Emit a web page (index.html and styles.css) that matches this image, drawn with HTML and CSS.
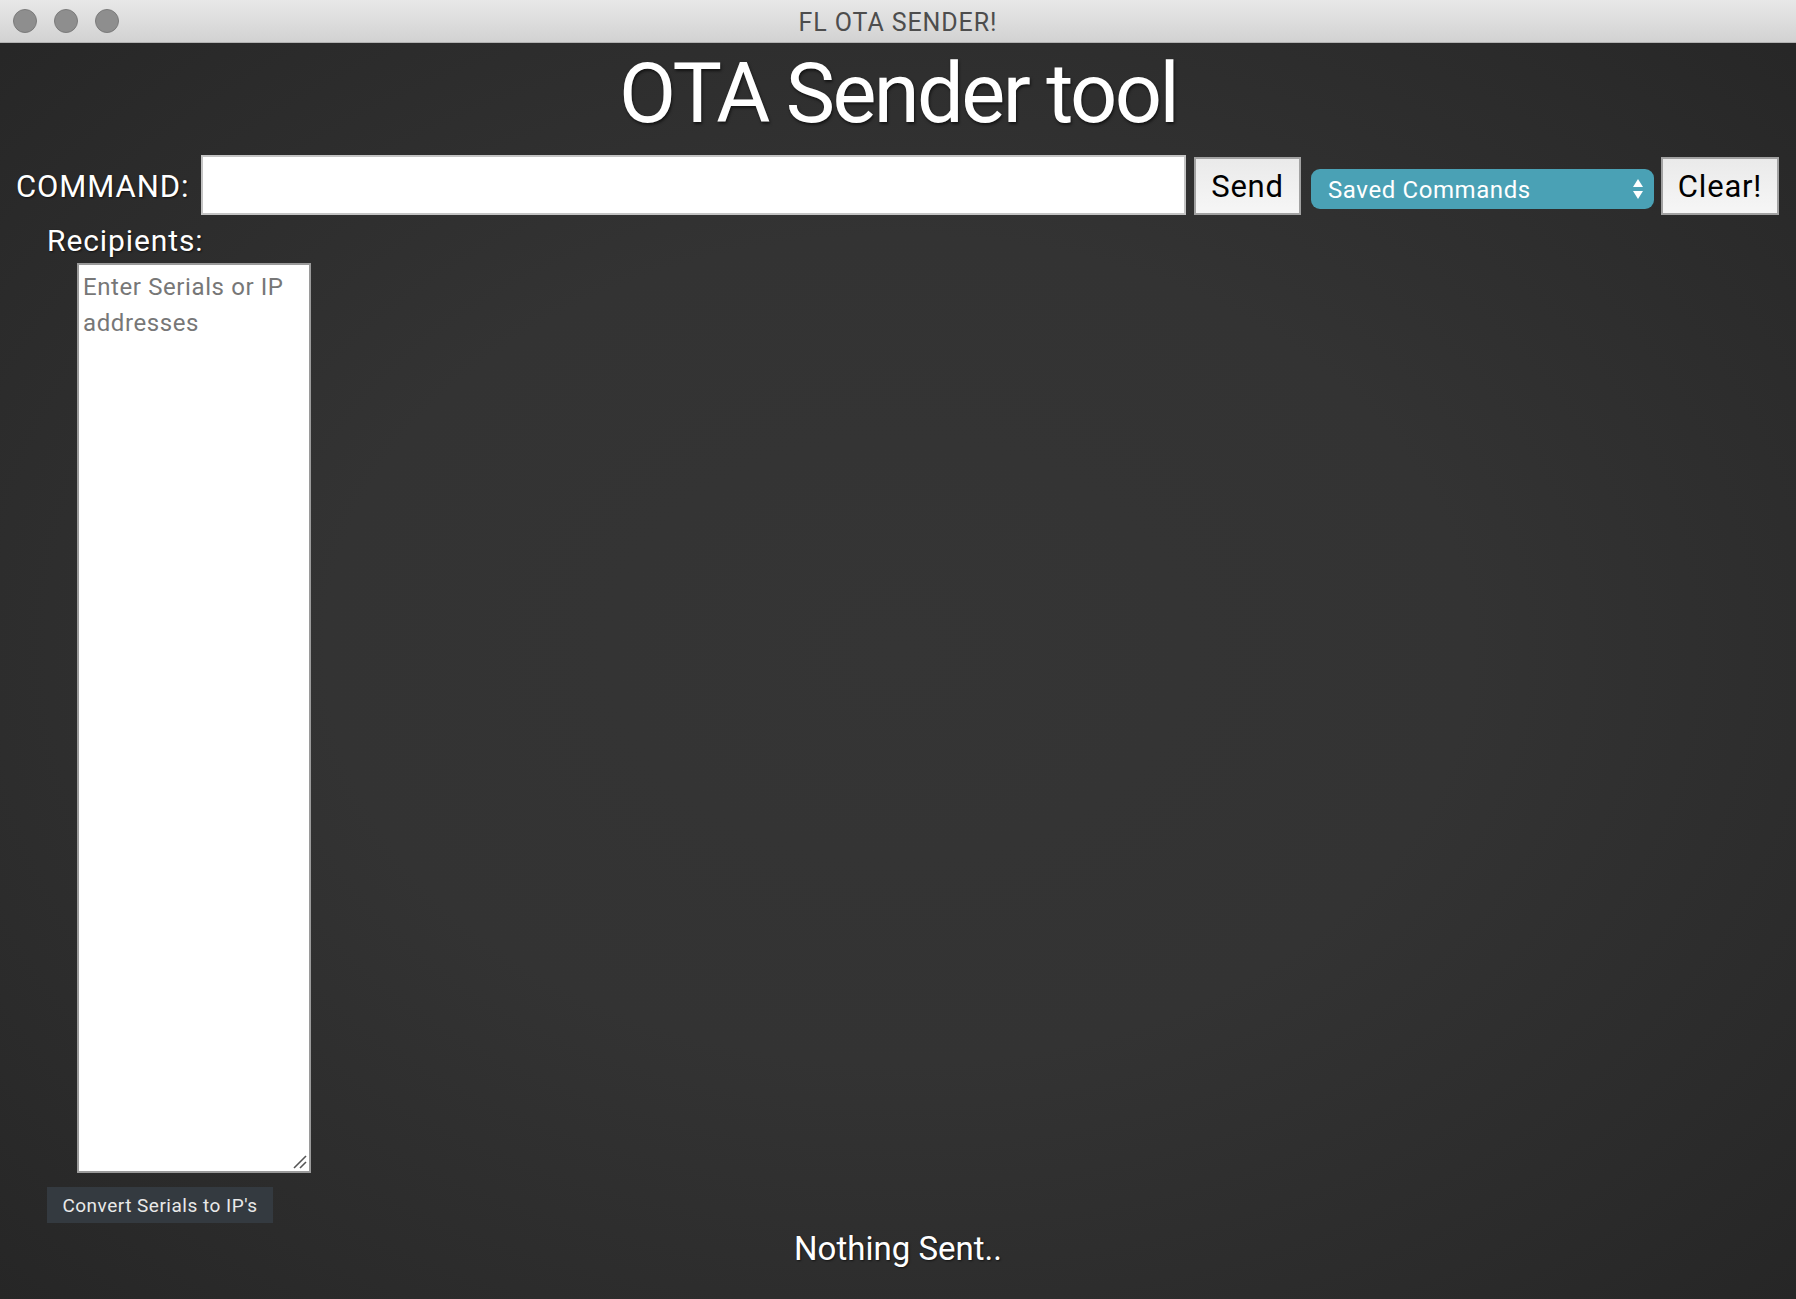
FILE: index.html
```html
<!DOCTYPE html>
<html lang="en">
<head>
<meta charset="utf-8">
<title>FL OTA SENDER!</title>
<link rel="stylesheet" href="styles.css">
</head>
<body>
<div class="window">
  <header class="titlebar">
    <div class="lights">
      <span class="light"></span>
      <span class="light"></span>
      <span class="light"></span>
    </div>
    <div class="window-title">FL OTA SENDER!</div>
    <div class="titlebar-spacer"></div>
  </header>
  <main class="app">
    <h1 class="heading">OTA Sender tool</h1>
    <div class="command-row">
      <label class="command-label" for="cmd">COMMAND:</label>
      <input class="command-input" id="cmd" type="text">
      <button class="btn btn-send" type="button">Send</button>
      <div class="saved-select">
        <span class="saved-text">Saved Commands</span>
        <svg class="saved-arrows" width="12" height="22" viewBox="0 0 12 22" aria-hidden="true">
          <polygon points="6,1 11,9 1,9" fill="#ffffff"/>
          <polygon points="1,13 11,13 6,21" fill="#ffffff"/>
        </svg>
      </div>
      <button class="btn btn-clear" type="button">Clear!</button>
    </div>
    <div class="recipients-label">Recipients:</div>
    <div class="recipients-box">
      <textarea class="recipients" placeholder="Enter Serials or IP addresses"></textarea>
      <svg class="resize-grip" width="14" height="14" viewBox="0 0 14 14" aria-hidden="true">
        <line x1="1" y1="13" x2="13" y2="1" stroke="#555" stroke-width="1.6"/>
        <line x1="7" y1="13" x2="13" y2="7" stroke="#555" stroke-width="1.6"/>
      </svg>
    </div>
    <button class="convert" type="button">Convert Serials to IP's</button>
    <p class="status">Nothing Sent..</p>
  </main>
</div>
</body>
</html>
```
FILE: styles.css
```css
* {
  box-sizing: border-box;
}

html, body {
  margin: 0;
  padding: 0;
}

body {
  font-family: Roboto, "Liberation Sans", Arial, sans-serif;
  background: #262626;
}

.window {
  min-height: 1299px;
  display: flex;
  flex-direction: column;
  background: radial-gradient(ellipse at 50% 50%, #353535 0%, #333333 45%, #2b2b2b 80%, #262626 100%);
}

.titlebar {
  height: 43px;
  display: grid;
  grid-template-columns: 1fr auto 1fr;
  align-items: center;
  background: linear-gradient(#e8e8e8, #d2d2d2);
  border-bottom: 1px solid #b2b2b2;
}

.lights {
  display: flex;
  gap: 17px;
  padding-left: 13px;
}

.light {
  width: 24px;
  height: 24px;
  border-radius: 50%;
  background: #8e8e8e;
  border: 1px solid #7b7b7b;
}

.window-title {
  font-size: 25px;
  letter-spacing: 0.9px;
  color: #4d4d4d;
  padding-top: 3px;
}

.app {
  flex: 1;
  display: flex;
  flex-direction: column;
  align-items: flex-start;
  color: #ffffff;
}

.heading {
  align-self: stretch;
  text-align: center;
  margin: 9px 0 0;
  font-size: 83px;
  font-weight: 400;
  line-height: 1;
  letter-spacing: -2.6px;
  text-shadow: 1px 2px 3px rgba(0, 0, 0, 0.6);
}

.command-row {
  display: flex;
  align-items: flex-start;
  margin-top: 20px;
  padding-left: 16px;
}

.command-label {
  width: 185px;
  margin-top: 16px;
  font-size: 31px;
  line-height: 1;
  letter-spacing: 0.9px;
  text-shadow: 1px 1px 2px rgba(0, 0, 0, 0.6);
}

.command-input {
  width: 985px;
  height: 60px;
  border: 2px solid #c4c4c4;
  background: #ffffff;
  font-family: inherit;
  font-size: 24px;
  padding: 0 8px;
  outline: none;
}

.btn {
  height: 58px;
  margin-top: 2px;
  border: 2px solid #a2a2a2;
  background: linear-gradient(#eaeaea, #f6f6f6);
  font-family: inherit;
  font-size: 31px;
  line-height: 1;
  letter-spacing: 0.8px;
  color: #000000;
  padding: 0;
}

.btn-send {
  width: 107px;
  margin-left: 8px;
}

.btn-clear {
  width: 118px;
  margin-left: 7px;
}

.saved-select {
  width: 343px;
  height: 40px;
  margin-top: 14px;
  margin-left: 10px;
  border-radius: 9px;
  background: #4aa1b5;
  display: flex;
  align-items: center;
  justify-content: space-between;
  padding: 0 10px 0 17px;
}

.saved-text {
  font-size: 24px;
  line-height: 1;
  letter-spacing: 0.6px;
  color: #ffffff;
  padding-top: 1px;
}

.saved-arrows {
  display: block;
}

.recipients-label {
  margin-top: 11px;
  padding-left: 47px;
  font-size: 30px;
  line-height: 1;
  letter-spacing: 0.9px;
  text-shadow: 1px 1px 2px rgba(0, 0, 0, 0.6);
}

.recipients-box {
  position: relative;
  margin: 7px 0 0 77px;
  width: 234px;
  height: 910px;
}

.recipients {
  display: block;
  width: 100%;
  height: 100%;
  resize: none;
  border: 2px solid #9a9a9a;
  padding: 4px;
  background: #ffffff;
  font-family: inherit;
  font-size: 24px;
  line-height: 36px;
  letter-spacing: 0.6px;
  color: #333333;
  outline: none;
}

.recipients::placeholder {
  color: #777777;
}

.resize-grip {
  position: absolute;
  right: 4px;
  bottom: 4px;
}

.convert {
  margin: 14px 0 0 47px;
  width: 226px;
  height: 36px;
  border: none;
  background: #343a40;
  color: #e9e9e9;
  font-family: inherit;
  font-size: 19px;
  letter-spacing: 0.5px;
  padding: 0;
  text-align: center;
}

.status {
  align-self: stretch;
  text-align: center;
  margin: 9px 0 0;
  font-size: 33px;
  line-height: 1;
  text-shadow: 1px 1px 2px rgba(0, 0, 0, 0.6);
}
```
